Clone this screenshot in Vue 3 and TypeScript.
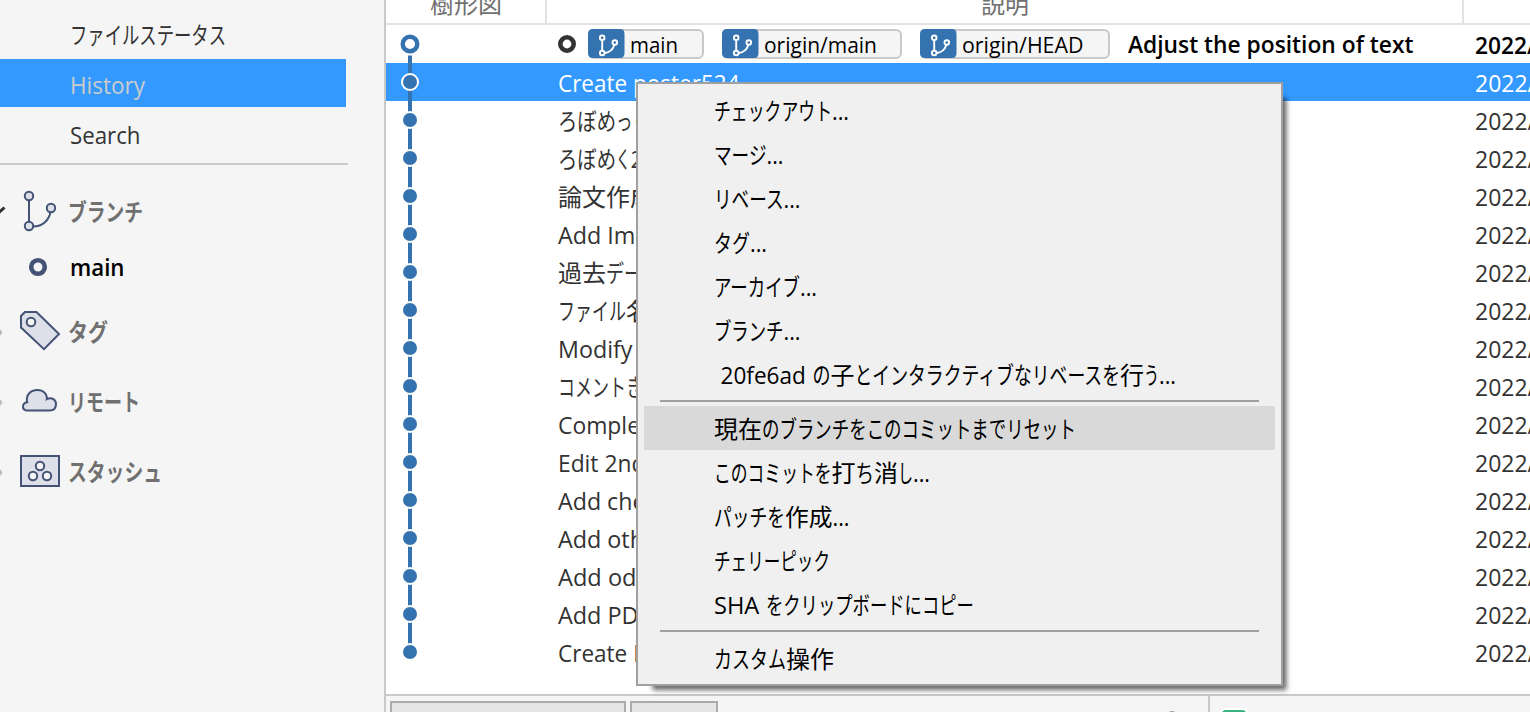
<script setup lang="ts">
import { h, type FunctionalComponent } from 'vue'

// A stretch of text and the advance width it occupies
type Run = [text: string, width: number]

interface Commit {
  runs: Run[]
  kind?: 'head' | 'selected'
}
interface MenuEntry {
  runs?: Run[]
  active?: boolean
  separator?: boolean
}

// Lays runs out side by side on one baseline, each condensed to its own width
const Fit: FunctionalComponent<{ runs: Run[]; base: number; height: number }> = (props) => {
  let x = 0
  const nodes = props.runs.map(([text, width]) => {
    const node = h('text', { x, y: props.base, textLength: width, lengthAdjust: 'spacingAndGlyphs' }, text)
    x += width
    return node
  })
  return h('svg', { class: 'fit', width: Math.ceil(x), height: props.height }, nodes)
}
Fit.props = ['runs', 'base', 'height']

const commits: Commit[] = [
  { kind: 'head', runs: [['Adjust the position of text', 285.5]] },
  { kind: 'selected', runs: [['Create poster524', 181.5]] },
  { runs: [['ろぼめ', 58], ['っ', 16.5], ['く', 17]] },
  { runs: [['ろぼめ', 58], ['く', 14.5], ['2', 13]] },
  { runs: [['論文作成', 96]] },
  { runs: [['Add Im', 77.3]] },
  { runs: [['過去', 48], ['デー', 36]] },
  { runs: [['ファイル', 68], ['名', 24]] },
  { runs: [['Modify', 74.5]] },
  { runs: [['コメント', 68], ['き', 18]] },
  { runs: [['Comple', 82]] },
  { runs: [['Edit 2nd', 87.4]] },
  { runs: [['Add che', 87.5]] },
  { runs: [['Add oth', 86]] },
  { runs: [['Add od', 78.5]] },
  { runs: [['Add PD', 80.6]] },
  { runs: [['Create P', 88.7]] },
]

const badges: { runs: Run[]; width: number }[] = [
  { runs: [['main', 48]], width: 116 },
  { runs: [['origin/main', 113]], width: 180 },
  { runs: [['origin/HEAD', 121.5]], width: 190 },
]

const dots: Run = ['...', 17]
const menu: MenuEntry[] = [
  { runs: [['チェックアウト', 118], dots] },
  { runs: [['マージ', 52.5], dots] },
  { runs: [['リベース', 69.5], dots] },
  { runs: [['タグ', 36], dots] },
  { runs: [['アーカイブ', 86], dots] },
  { runs: [['ブランチ', 69.5], dots] },
  { runs: [['\u00a0', 6.6], ['20fe6ad', 85.2], ['\u00a0', 6.7], ['の', 18], ['子', 24], ['とインタラクティブなリベースを', 265.5], ['行', 24], ['う', 15], dots] },
  { separator: true },
  { active: true, runs: [['現在', 48], ['のブランチをこのコミットまでリセット', 314]] },
  { runs: [['このコミットを', 117.5], ['打', 24], ['ち', 18.5], ['消', 24], ['し', 15], dots] },
  { runs: [['パッチを', 71], ['作成', 47.5], dots] },
  { runs: [['チェリーピック', 116]] },
  { runs: [['SHA', 45.3], ['\u00a0', 6.6], ['をクリップボードにコピー', 208]] },
  { separator: true },
  { runs: [['カスタム', 72], ['操作', 48]] },
]
</script>

<template>
  <div class="app">
    <aside class="side">
      <div class="nav"><Fit :runs="[['ファイルステータス', 156]]" :base="33" :height="48" /></div>
      <div class="nav on"><Fit :runs="[['History', 75]]" :base="35" :height="48" /></div>
      <div class="nav search"><Fit :runs="[['Search', 70.5]]" :base="35" :height="48" /></div>
      <div class="rule"></div>
      <div class="group branches">
        <svg class="icon" width="68" height="60" viewBox="0 0 68 60">
          <path d="M-1 32.500L4.500 27.500" stroke="#333" stroke-width="3" fill="none" />
          <path d="M29 19V45M33 46.500C43 46.500 49 40 50.500 32" stroke="#435275" stroke-width="2" fill="none" />
          <g fill="#dde0e8" stroke="#435275" stroke-width="2">
            <circle cx="29" cy="16" r="4.200" /><circle cx="29" cy="46" r="4.200" /><circle cx="51" cy="28" r="4.200" />
          </g>
        </svg>
        <Fit :runs="[['ブランチ', 75]]" :base="41" :height="60" />
      </div>
      <div class="group current">
        <svg class="icon" width="70" height="50" viewBox="0 0 70 50">
          <circle cx="38" cy="27" r="6.800" stroke="#435275" stroke-width="4.600" fill="none" />
        </svg>
        <Fit :runs="[['main', 54.500]]" :base="36" :height="50" />
      </div>
      <div class="group">
        <svg class="icon" width="68" height="70" viewBox="0 0 68 70">
          <path d="M0 39L2.500 42.500L0 46Z" fill="#bbb" />
          <path d="M25 22H36.500L59 44L44 59.200L21 37.500V26Z" fill="#dde0e8" stroke="#435275" stroke-width="2" />
          <circle cx="31" cy="32" r="4.300" fill="#f5f5f5" stroke="#435275" stroke-width="2" />
        </svg>
        <Fit :runs="[['タグ', 40]]" :base="51" :height="70" />
      </div>
      <div class="group">
        <svg class="icon" width="68" height="70" viewBox="0 0 68 70">
          <path d="M0 39L2.500 42.500L0 46Z" fill="#bbb" />
          <path d="M27 50.500C21.500 50 21.800 43 27.200 42.200C25.500 35 30.500 30 37.500 30C43.500 30 47.200 34 46.800 39.200C52 36.500 56 40 56 44C56 48 53.500 50.500 49.500 50.500Z" fill="#dde0e8" stroke="#435275" stroke-width="2" />
        </svg>
        <Fit :runs="[['リモート', 72]]" :base="51" :height="70" />
      </div>
      <div class="group">
        <svg class="icon" width="68" height="70" viewBox="0 0 68 70">
          <path d="M0 39L2.500 42.500L0 46Z" fill="#bbb" />
          <rect x="21" y="26" width="38" height="30" fill="#dde0e8" stroke="#435275" stroke-width="2" />
          <g fill="#f5f5f5" stroke="#435275" stroke-width="2">
            <circle cx="40" cy="36" r="4.200" /><circle cx="33" cy="46" r="4.200" /><circle cx="47" cy="46" r="4.200" />
          </g>
        </svg>
        <Fit :runs="[['スタッシュ', 94]]" :base="51" :height="70" />
      </div>
    </aside>

    <main class="log">
      <header class="head">
        <div class="col graph-col"><Fit :runs="[['樹形図', 72]]" :base="13" :height="23" /></div>
        <div class="col desc-col"><Fit :runs="[['説明', 48]]" :base="13" :height="23" /></div>
        <div class="col"></div>
      </header>

      <div class="rows">
        <div v-for="(c, i) in commits" :key="i" class="row" :class="c.kind">
          <svg class="graph" width="172" height="38" viewBox="0 0 172 38">
            <template v-if="c.kind === 'head'">
              <path d="M24 30.500V38" stroke="#3572b0" stroke-width="4" />
              <circle cx="24" cy="19" r="7.300" fill="#fff" stroke="#3572b0" stroke-width="4.400" />
            </template>
            <template v-else>
              <path :d="i === commits.length - 1 ? 'M24 0V19' : 'M24 0V38'" stroke="#3572b0" stroke-width="4" />
              <circle cx="24" cy="19" r="9" fill="#fff" />
              <circle cx="24" cy="19" r="7" fill="#3572b0" />
            </template>
          </svg>
          <div class="desc">
            <template v-if="c.kind === 'head'">
              <svg class="here" width="30" height="38" viewBox="0 0 30 38">
                <circle cx="9" cy="19" r="6.700" fill="none" stroke="#333" stroke-width="4.600" />
              </svg>
              <div v-for="b in badges" :key="b.runs[0][0]" class="badge" :style="{ width: b.width + 'px' }">
                <svg class="mark" width="37" height="30" viewBox="0 0 37 30">
                  <path d="M0 5Q0 0 5 0H32Q36.500 0 36.500 5V24Q36.500 29 32 29H5Q0 29 0 24Z" fill="#3572b0" />
                  <g fill="none" stroke="#fff" stroke-width="1.900">
                    <path d="M14.200 11.500V21.500M16.700 24C22 23.500 25 20 26.300 16" />
                    <circle cx="14.200" cy="8.800" r="2.300" /><circle cx="14.200" cy="24" r="2.300" /><circle cx="26.800" cy="13.500" r="2.300" />
                  </g>
                </svg>
                <Fit :runs="b.runs" :base="24" :height="30" />
              </div>
            </template>
            <Fit :runs="c.runs" :base="c.kind === 'head' ? 28 : 29" :height="38" />
          </div>
          <div class="date"><Fit :runs="[['2022/', 61]]" :base="29" :height="38" /></div>
        </div>
      </div>

      <footer class="foot">
        <div class="foot-left">
          <div class="box wide"></div>
          <div class="box"></div>
          <div class="knob"></div>
        </div>
        <div class="foot-right"><div class="chip"></div></div>
      </footer>
    </main>

    <div class="menu">
      <template v-for="(m, i) in menu" :key="i">
        <div v-if="m.separator" class="sep"></div>
        <div v-else class="item" :class="{ active: m.active }">
          <Fit :runs="m.runs ?? []" :base="32" :height="44" />
        </div>
      </template>
    </div>
  </div>
</template>

<style>
body {
  overflow: hidden;
}
.fit {
  display: block;
  flex: none;
  overflow: visible;
  fill: currentColor;
}
</style>

<style scoped>
.app {
  position: relative;
  display: flex;
  width: 1530px;
  height: 712px;
  overflow: hidden;
  background: #fff;
  color: #333;
  font-family: 'Open Sans', 'Noto Sans CJK JP', sans-serif;
  font-size: 24px;
}
.side {
  box-sizing: border-box;
  flex: none;
  width: 386px;
  padding-top: 11px;
  background: #f5f5f5;
  border-right: 2px solid #c9c9c9;
}
.nav {
  width: 346px;
  height: 48px;
  box-sizing: border-box;
  padding-left: 70px;
}
.nav.on {
  background: #39f;
  color: #ccc;
}
.nav.search {
  margin-top: 2px;
}
.rule {
  width: 348px;
  height: 2px;
  margin-top: 6px;
  background: #c9c9c9;
}
.branches {
  margin-top: 15px;
}
.group {
  display: flex;
  color: #707070;
  font-weight: 600;
}
.group.current {
  color: #000;
}
.icon {
  display: block;
  flex: none;
}
.log {
  flex: none;
  display: flex;
  flex-direction: column;
  width: 1144px;
  overflow: hidden;
}
.head {
  display: flex;
  height: 23px;
  border-bottom: 2px solid #e2e2e2;
  color: #707070;
}
.col {
  display: flex;
  justify-content: center;
}
.graph-col {
  width: 159px;
  border-right: 2px solid #e2e2e2;
}
.desc-col {
  width: 915px;
  border-right: 2px solid #e2e2e2;
}
.rows {
  height: 669px;
}
.row {
  display: flex;
  height: 38px;
}
.row.selected {
  background: #39f;
  color: #fff;
}
.row.head {
  border: 0;
  color: #000;
  font-weight: 600;
}
.graph {
  display: block;
  flex: none;
}
.desc {
  display: flex;
  flex: none;
  align-items: center;
  width: 917px;
}
.here {
  flex: none;
}
.badge {
  box-sizing: border-box;
  flex: none;
  display: flex;
  gap: 5px;
  height: 30px;
  margin-right: 18px;
  border: 2px solid #c9c9c9;
  border-radius: 6px;
  background: #f5f5f5;
  font-size: 22px;
  font-weight: 400;
}
.badge > svg {
  margin-top: -2px;
}
.mark {
  display: block;
  flex: none;
  margin-left: -2px;
}
.foot {
  display: flex;
  height: 16px;
  border-top: 2px solid #c9c9c9;
  background: #f5f5f5;
}
.foot-left {
  box-sizing: border-box;
  display: flex;
  gap: 4px;
  width: 824px;
  padding: 5px 0 0 4px;
  border-right: 2px solid #c9c9c9;
}
.box {
  box-sizing: border-box;
  width: 88px;
  height: 30px;
  border: 2px solid #ababab;
  background: #e5e5e5;
}
.box.wide {
  width: 236px;
}
.knob {
  width: 8px;
  height: 8px;
  margin: 10px 0 0 446px;
  border-radius: 50%;
  background: #999;
}
.foot-right {
  padding: 14px 0 0 11px;
}
.chip {
  width: 26px;
  height: 20px;
  border-radius: 5px;
  background: #36b37e;
  box-shadow: 0 0 0 2px #fff;
}
.menu {
  position: absolute;
  left: 636px;
  top: 82px;
  box-sizing: border-box;
  width: 647px;
  height: 604px;
  padding: 4px 6px;
  border: 2px solid #a0a0a0;
  background: #f0f0f0;
  box-shadow: 9.5px 10px 5px -6px rgba(0, 0, 0, 0.6);
  color: #000;
}
.item {
  height: 44px;
  padding-left: 70px;
}
.item.active {
  background: #d9d9d9;
}
.sep {
  height: 2px;
  margin: 4px 16px;
  background: #a0a0a0;
}
</style>
